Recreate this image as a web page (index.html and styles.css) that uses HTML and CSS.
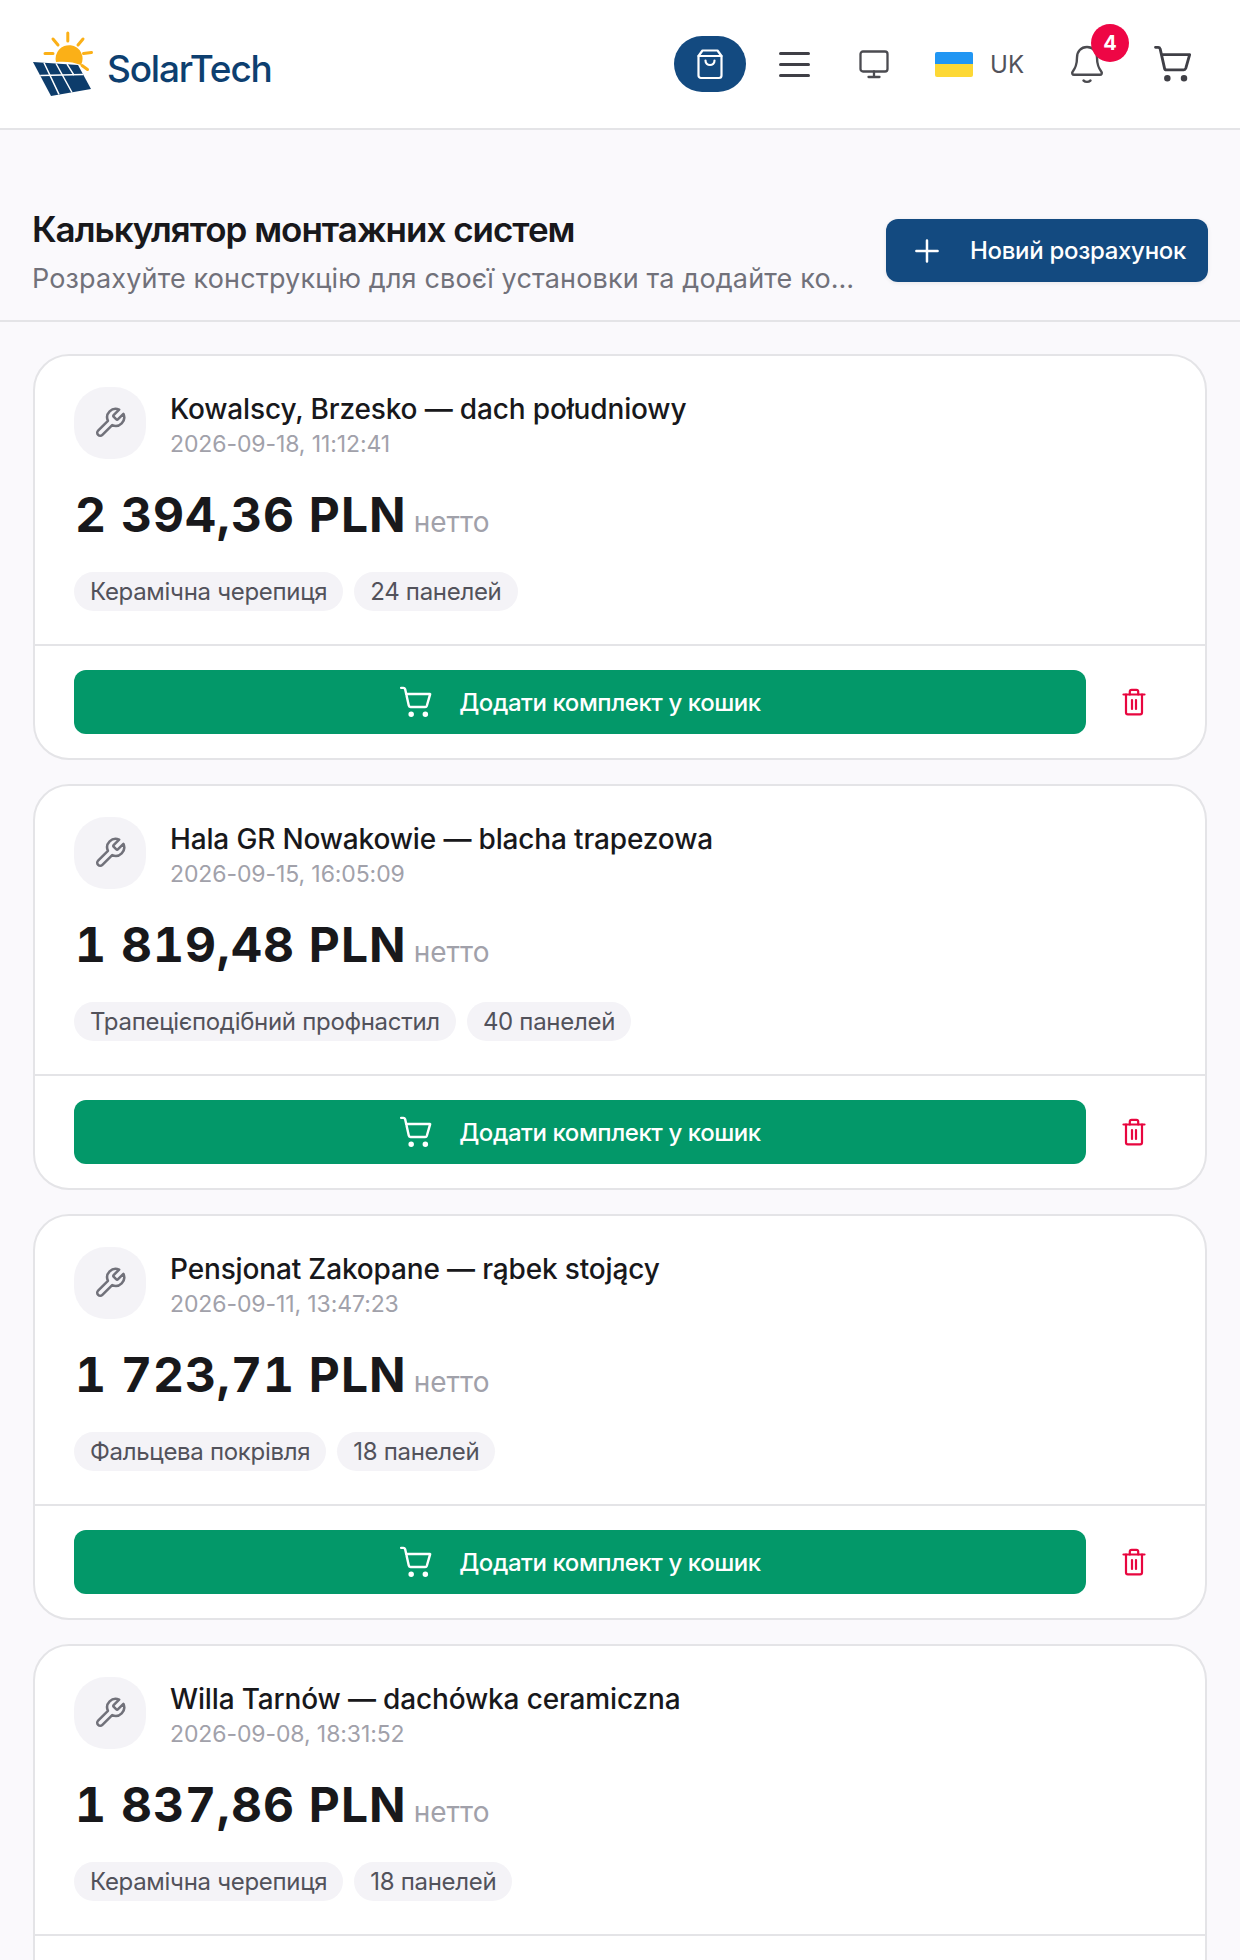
FILE: index.html
```html
<!DOCTYPE html>
<html lang="uk">
<head>
    <meta charset="UTF-8">
    <meta name="viewport" content="width=device-width, initial-scale=1.0">
    <title>SolarTech</title>
    <link rel="stylesheet" href="styles.css">
</head>
<body>
<svg class="defs" width="0" height="0">
    <symbol id="i-cart" viewBox="0 0 24 24" fill="none" stroke="currentColor" stroke-width="1.7" stroke-linecap="round" stroke-linejoin="round">
        <path d="M1.5 2h1.6c.6 0 1 .3 1.2.9l2.6 11.6c.1.6.6 1 1.2 1h10.4c.6 0 1-.4 1.2-1L22 6.4H5"/>
        <circle cx="8.6" cy="20.6" r="1.1" fill="currentColor"/>
        <circle cx="18.6" cy="20.6" r="1.1" fill="currentColor"/>
    </symbol>
    <symbol id="i-wrench" viewBox="0 0 24 24" fill="none" stroke="currentColor" stroke-width="1.8" stroke-linecap="round" stroke-linejoin="round">
        <path d="M14.7 6.3a1 1 0 0 0 0 1.4l1.6 1.6a1 1 0 0 0 1.4 0l3.77-3.77a6 6 0 0 1-7.94 7.94l-6.91 6.91a2.12 2.12 0 0 1-3-3l6.91-6.91a6 6 0 0 1 7.94-7.94l-3.76 3.76z"/>
    </symbol>
    <symbol id="i-trash" viewBox="0 0 24 28" fill="none" stroke="currentColor" stroke-width="2.2" stroke-linecap="round" stroke-linejoin="round">
        <path d="M1.5 6.5h21"/>
        <path d="M4 6.5v18c0 1 .7 1.8 1.8 1.8h12.4c1.1 0 1.8-.8 1.8-1.8v-18"/>
        <path d="M7.8 6.5V3.6c0-1 .7-1.8 1.8-1.8h4.8c1.1 0 1.8.8 1.8 1.8v2.9"/>
        <path d="M10 12v9M14 12v9"/>
    </symbol>
</svg>

<div class="page">
    <header class="topbar">
        <div class="logo">
            <svg class="logo-mark" viewBox="32 30 62 68">
                <!-- sun -->
                <g stroke="#fbb017" stroke-width="3" stroke-linecap="round" fill="none">
                    <path d="M67.800 33v8M53 39l5 6M83 39l-5 6M45 53.500h8M83.500 53.500l8-1M82 65.500l5.500 4"/>
                </g>
                <path d="M56 62a13.500 13.500 0 1 1 25 3c-7-3-16-4-25-3z" fill="#fbb017"/>
                <!-- panel -->
                <polygon points="33,62 78,65 91,89 51,96" fill="#0d3c6b"/>
                <g stroke="#fff" stroke-width="1.500" fill="none">
                    <path d="M40.200 75.600L83.200 74.600"/>
                    <path d="M44 62.700l15 31.700M56 63.500l16 29M67 64.200l7 11"/>
                </g>
            </svg>
            <span class="logo-text">SolarTech</span>
        </div>
        <nav class="nav">
            <a class="nav-pill">
                <svg viewBox="0 0 28 32" width="28" height="32" fill="none" stroke="#fff" stroke-width="2.2" stroke-linecap="round" stroke-linejoin="round">
                    <path d="M6.500 2.500h15l4 5.500v19.500a2.500 2.500 0 0 1-2.500 2.500H5a2.500 2.500 0 0 1-2.500-2.500V8z"/>
                    <path d="M2.500 8h23"/>
                    <path d="M9.500 12.500c0 6 9 6 9 0"/>
                </svg>
            </a>
            <a class="nav-menu">
                <span></span><span></span><span></span>
            </a>
            <a class="nav-monitor">
                <svg viewBox="0 0 30 29" width="30" height="29" fill="none" stroke="#4b4b50" stroke-width="2.300" stroke-linecap="round" stroke-linejoin="round">
                    <rect x="1.500" y="1.500" width="27" height="20" rx="2.500"/>
                    <path d="M15 21.500v5.500M9.500 27h11"/>
                </svg>
            </a>
            <a class="nav-lang">
                <span class="flag"></span>
                <span class="lang-code">UK</span>
            </a>
            <a class="nav-bell">
                <svg viewBox="0 0 34 40" width="34" height="40" fill="none" stroke="#4b4b50" stroke-width="2.400" stroke-linecap="round" stroke-linejoin="round">
                    <path d="M17 3c-6 0-10 4.500-10 10.500 0 8-2 11-4.500 14.500-.8 1.200 0 2.800 1.500 2.800h26c1.500 0 2.300-1.600 1.500-2.800C29 24.500 27 21.500 27 13.500 27 7.500 23 3 17 3z"/>
                    <path d="M13.500 36.500c2 1.800 5 1.800 7 0"/>
                </svg>
                <span class="badge">4</span>
            </a>
            <a class="nav-cart">
                <svg width="40" height="40" class="cart-dark"><use href="#i-cart"/></svg>
            </a>
        </nav>
    </header>

    <section class="page-head">
        <div class="page-head-text">
            <h1>Калькулятор монтажних систем</h1>
            <p>Розрахуйте конструкцію для своєї установки та додайте комплект у кошик</p>
        </div>
        <button class="btn-new">
            <svg viewBox="0 0 24 24" width="30" height="30" fill="none" stroke="#fff" stroke-width="2" stroke-linecap="round"><path d="M12 3.500v17M3.500 12h17"/></svg>
            <span>Новий розрахунок</span>
        </button>
    </section>

    <main class="list">
        <article class="card">
            <div class="card-body">
                <div class="card-top">
                    <div class="tile"><svg width="34" height="34"><use href="#i-wrench"/></svg></div>
                    <div class="card-title">
                        <h3>Kowalscy, Brzesko — dach południowy</h3>
                        <div class="date">2026-09-18, 11:12:41</div>
                    </div>
                </div>
                <div class="price"><strong>2 394,36 PLN</strong> <span>нетто</span></div>
                <div class="chips">
                    <span class="chip">Керамічна черепиця</span>
                    <span class="chip">24 панелей</span>
                </div>
            </div>
            <div class="card-foot">
                <button class="btn-add"><svg width="34" height="34"><use href="#i-cart"/></svg><span>Додати комплект у кошик</span></button>
                <button class="btn-del"><svg width="24" height="28"><use href="#i-trash"/></svg></button>
            </div>
        </article>

        <article class="card">
            <div class="card-body">
                <div class="card-top">
                    <div class="tile"><svg width="34" height="34"><use href="#i-wrench"/></svg></div>
                    <div class="card-title">
                        <h3>Hala GR Nowakowie — blacha trapezowa</h3>
                        <div class="date">2026-09-15, 16:05:09</div>
                    </div>
                </div>
                <div class="price"><strong>1 819,48 PLN</strong> <span>нетто</span></div>
                <div class="chips">
                    <span class="chip">Трапецієподібний профнастил</span>
                    <span class="chip">40 панелей</span>
                </div>
            </div>
            <div class="card-foot">
                <button class="btn-add"><svg width="34" height="34"><use href="#i-cart"/></svg><span>Додати комплект у кошик</span></button>
                <button class="btn-del"><svg width="24" height="28"><use href="#i-trash"/></svg></button>
            </div>
        </article>

        <article class="card">
            <div class="card-body">
                <div class="card-top">
                    <div class="tile"><svg width="34" height="34"><use href="#i-wrench"/></svg></div>
                    <div class="card-title">
                        <h3>Pensjonat Zakopane — rąbek stojący</h3>
                        <div class="date">2026-09-11, 13:47:23</div>
                    </div>
                </div>
                <div class="price"><strong>1 723,71 PLN</strong> <span>нетто</span></div>
                <div class="chips">
                    <span class="chip">Фальцева покрівля</span>
                    <span class="chip">18 панелей</span>
                </div>
            </div>
            <div class="card-foot">
                <button class="btn-add"><svg width="34" height="34"><use href="#i-cart"/></svg><span>Додати комплект у кошик</span></button>
                <button class="btn-del"><svg width="24" height="28"><use href="#i-trash"/></svg></button>
            </div>
        </article>

        <article class="card">
            <div class="card-body">
                <div class="card-top">
                    <div class="tile"><svg width="34" height="34"><use href="#i-wrench"/></svg></div>
                    <div class="card-title">
                        <h3>Willa Tarnów — dachówka ceramiczna</h3>
                        <div class="date">2026-09-08, 18:31:52</div>
                    </div>
                </div>
                <div class="price"><strong>1 837,86 PLN</strong> <span>нетто</span></div>
                <div class="chips">
                    <span class="chip">Керамічна черепиця</span>
                    <span class="chip">18 панелей</span>
                </div>
            </div>
            <div class="card-foot"></div>
        </article>
    </main>
</div>
</body>
</html>
```

FILE: styles.css
```css
* {
    box-sizing: border-box;
}
html, body {
    margin: 0;
    height: 1960px;
    overflow: hidden;
}
body {
    font-family: Inter, "Noto Sans", sans-serif;
    background-color: #faf9fc;
    color: #18181b;
}
.defs {
    position: absolute;
}
.page {
    height: 1960px;
    overflow: hidden;
}
a {
    display: flex;
    align-items: center;
}
button {
    font-family: inherit;
    border: none;
    cursor: pointer;
}

/* top bar */
.topbar {
    height: 130px;
    padding: 0 47px 0 32px;
    display: flex;
    align-items: center;
    justify-content: space-between;
    background: #fff;
    border-bottom: 2px solid #e4e4e7;
}
.logo {
    display: flex;
    align-items: center;
    gap: 13px;
}
.logo-mark {
    width: 62px;
    height: 68px;
}
.logo-text {
    font-size: 37px;
    font-weight: 500;
    letter-spacing: -1.2px;
    color: #0d3f70;
    margin-top: 9px;
}
.nav {
    display: flex;
    align-items: center;
}
.nav-pill {
    width: 72px;
    height: 56px;
    border-radius: 28px;
    background: #134a80;
    justify-content: center;
    margin-right: 33px;
}
.nav-menu {
    width: 31px;
    flex-direction: column;
    gap: 8px;
    margin-right: 49px;
}
.nav-menu span {
    display: block;
    width: 31px;
    height: 3px;
    border-radius: 2px;
    background: #3f3f46;
}
.nav-monitor {
    margin-right: 46px;
}
.flag {
    width: 38px;
    height: 25px;
    border-radius: 2px;
    background: linear-gradient(#2196f3 50%, #fdd835 50%);
}
.nav-lang {
    gap: 17px;
    margin-right: 46px;
}
.lang-code {
    font-size: 24px;
    color: #52525b;
}
.nav-bell {
    position: relative;
    margin-right: 49px;
}
.badge {
    position: absolute;
    left: 21px;
    top: -20px;
    width: 38px;
    height: 38px;
    border-radius: 50%;
    background: #ee0645;
    color: #fff;
    font-size: 20px;
    font-weight: 700;
    display: flex;
    align-items: center;
    justify-content: center;
}
.cart-dark {
    color: #3f3f46;
}

/* heading */
.page-head {
    height: 192px;
    padding: 77px 32px 0;
    display: flex;
    justify-content: space-between;
    gap: 30px;
    border-bottom: 2px solid #e4e4e7;
}
.page-head-text {
    min-width: 0;
    flex: 1;
}
h1 {
    margin: 0;
    font-size: 35px;
    line-height: 44px;
    font-weight: 600;
    letter-spacing: -1px;
}
.page-head p {
    margin: 10px 0 0;
    font-size: 27px;
    line-height: 36px;
    letter-spacing: 0.15px;
    color: #71717a;
    white-space: nowrap;
    overflow: hidden;
    text-overflow: ellipsis;
}
.btn-new {
    width: 322px;
    height: 63px;
    flex: none;
    margin-top: 12px;
    padding: 0 22px 0 26px;
    border-radius: 12px;
    background: #134a80;
    color: #fff;
    font-size: 24px;
    font-weight: 500;
    letter-spacing: -0.3px;
    white-space: nowrap;
    display: flex;
    align-items: center;
    gap: 28px;
    box-shadow: 0 1px 4px rgba(0, 0, 0, 0.08);
}

/* cards */
.list {
    padding: 32px 33px 0;
    display: flex;
    flex-direction: column;
    gap: 24px;
}
.card {
    background: #fff;
    border: 2px solid #e4e4e7;
    border-radius: 36px;
    flex: none;
}
.card-body {
    height: 290px;
    padding: 31px 39px 0;
    border-bottom: 2px solid #e4e4e7;
}
.card-top {
    display: flex;
    align-items: flex-start;
    gap: 24px;
}
.card-title {
    padding-top: 4px;
}
.tile {
    width: 72px;
    height: 72px;
    border-radius: 32px;
    background: #f4f3f7;
    color: #71717a;
    display: flex;
    align-items: center;
    justify-content: center;
}
h3 {
    margin: 0;
    font-size: 28px;
    line-height: 36px;
    font-weight: 500;
    letter-spacing: -0.15px;
}
.date {
    font-size: 23px;
    line-height: 34px;
    letter-spacing: -0.1px;
    color: #a1a1aa;
}
.price {
    margin: 23px 0 0 1px;
    line-height: 62px;
    display: flex;
    align-items: baseline;
    gap: 7px;
}
.price strong {
    font-size: 48px;
    font-weight: 700;
    letter-spacing: 1px;
    font-variant-numeric: tabular-nums;
}
.price span {
    font-size: 28px;
    color: #a1a1aa;
}
.chips {
    display: flex;
    gap: 11px;
    margin-top: 19px;
}
.chip {
    height: 39px;
    padding: 0 16px;
    border-radius: 20px;
    background: #f4f3f7;
    color: #52525b;
    font-size: 24px;
    letter-spacing: -0.3px;
    line-height: 39px;
}
.card-foot {
    height: 112px;
    padding: 24px 59px 0 39px;
    display: flex;
    gap: 36px;
}
.btn-add {
    flex: 1;
    height: 64px;
    border-radius: 12px;
    background: #039869;
    color: #fff;
    font-size: 24px;
    font-weight: 500;
    letter-spacing: -0.43px;
    display: flex;
    align-items: center;
    justify-content: center;
    gap: 26px;
}
.btn-del {
    width: 24px;
    height: 64px;
    padding: 0;
    background: none;
    color: #e8063f;
    display: flex;
    align-items: center;
    justify-content: center;
}
```
